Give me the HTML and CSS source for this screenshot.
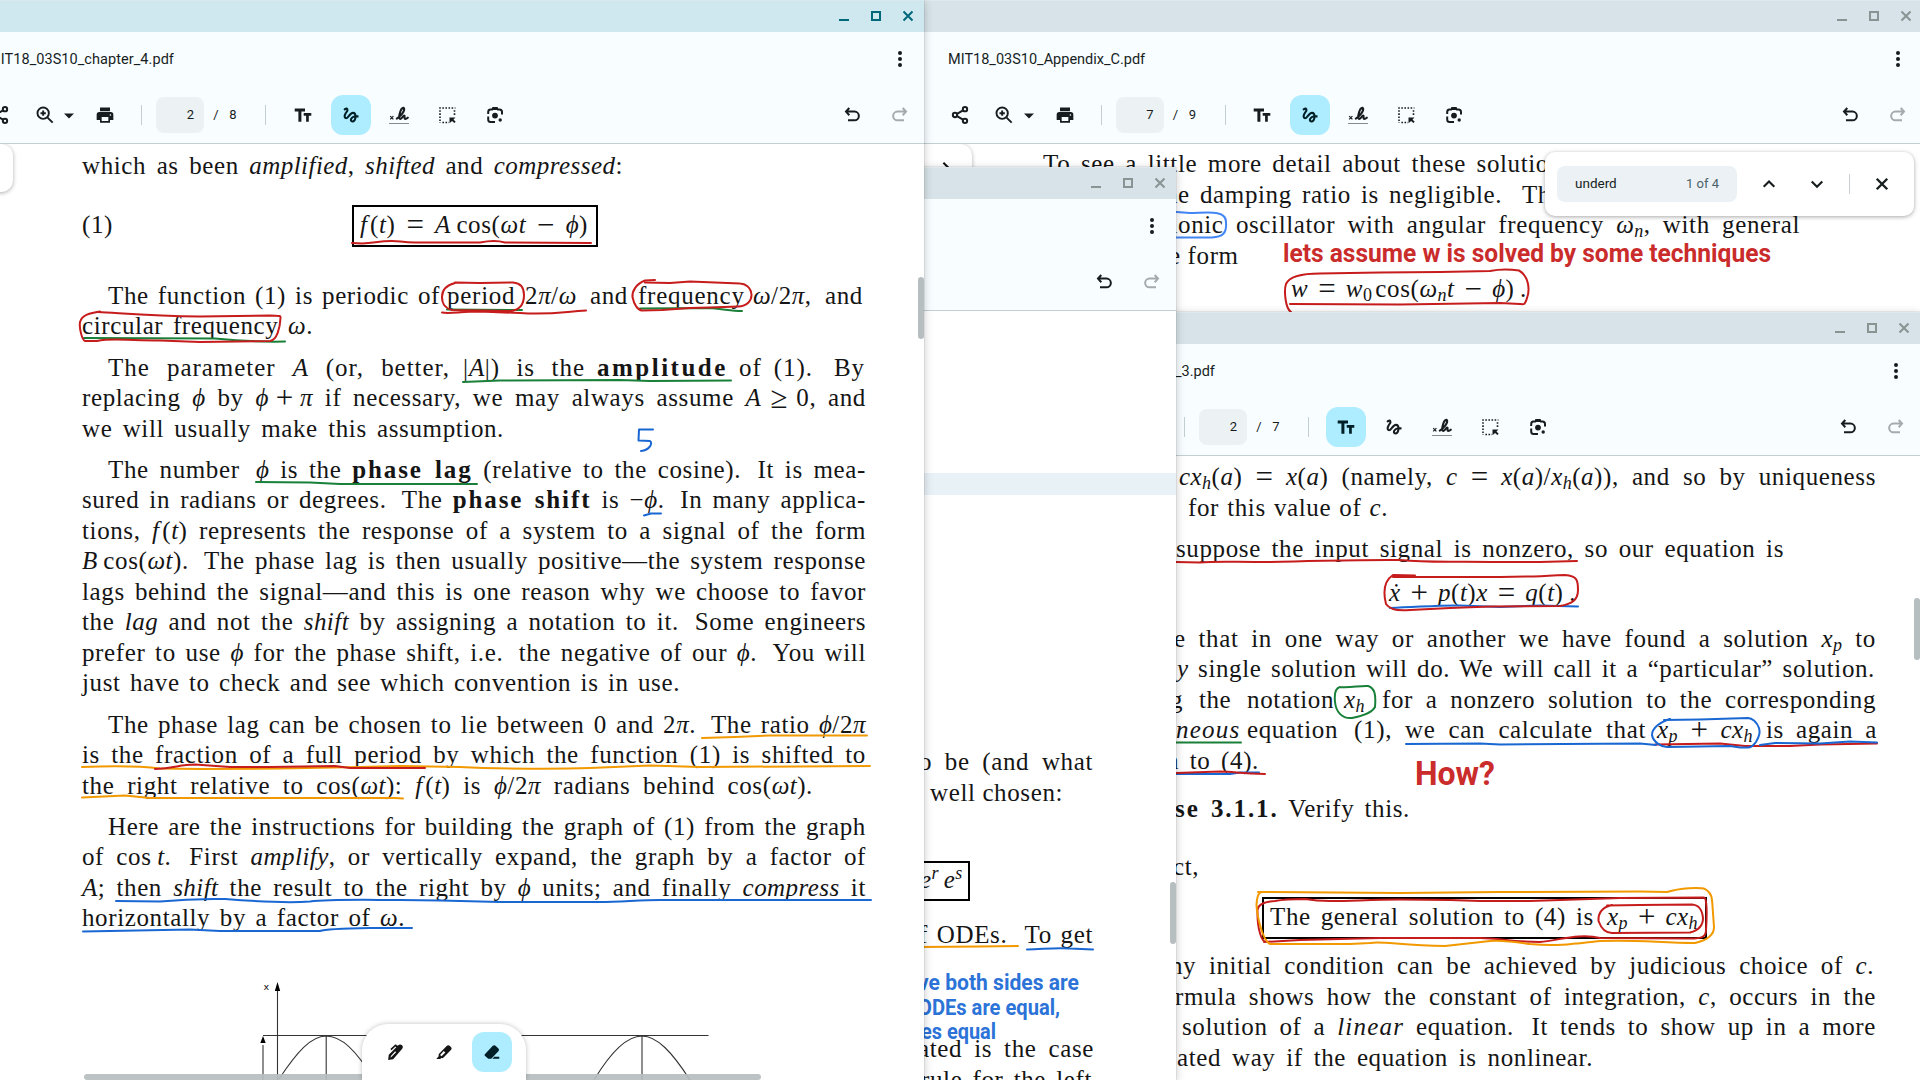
FILE: index.html
```html
<!DOCTYPE html>
<html lang="en">
<head>
<meta charset="utf-8">
<title>MIT18_03S10_chapter_4.pdf</title>
<link rel="stylesheet" href="styles.css">
</head>
<body>
<svg class="defs" aria-hidden="true">
  <symbol id="i-share" viewBox="0 0 24 24"><g fill="none" stroke="currentColor" stroke-width="2.4"><circle cx="18" cy="5" r="2.6"/><circle cx="6" cy="12" r="2.6"/><circle cx="18" cy="19" r="2.6"/><path d="M8.4 10.6l7.2-4.2M8.4 13.4l7.2 4.2"/></g></symbol>
  <symbol id="i-zoom" viewBox="0 0 24 24"><g fill="none" stroke="currentColor" stroke-width="2.3"><circle cx="9.8" cy="9.8" r="6.8"/><path d="M14.8 14.8l6.4 6.4M9.8 6.6v6.4M6.6 9.8H13"/></g></symbol>
  <symbol id="i-caret" viewBox="0 0 10 6"><path d="M0 .5h10L5 5.5z" fill="currentColor"/></symbol>
  <symbol id="i-print" viewBox="0 0 24 24"><path fill="currentColor" d="M18 7.5H6V3h12zM19 8.5H5a3 3 0 0 0-3 3V18h4v3.4h12V18h4v-6.500a3 3 0 0 0-3-3zM16 19.200H8v-4.700h8zM18.500 13a1 1 0 1 1 0-2 1 1 0 0 1 0 2z"/></symbol>
  <symbol id="i-text" viewBox="0 0 24 24"><path fill="currentColor" d="M3.700 5.500H14v3h-3.600v10.200h-3V8.500H3.700zM12.700 10h7.600v2.700h-2.500v6h-2.700v-6h-2.400z"/></symbol>
  <symbol id="i-draw" viewBox="0 0 24 24"><path fill="currentColor" d="M4.590 6.890c.7-.71 1.4-1.350 1.710-1.220.5.2 0 1.030-.3 1.520-.25.42-2.860 3.890-2.860 6.310 0 1.280.48 2.340 1.340 2.980.75.56 1.740.73 2.640.46 1.070-.31 1.950-1.400 3.060-2.770 1.210-1.490 2.830-3.440 4.080-3.440 1.630 0 1.650 1.010 1.760 1.790-3.780.64-5.380 3.670-5.380 5.370 0 1.700 1.440 3.090 3.210 3.090 1.630 0 4.290-1.330 4.690-6.100H21v-2.500h-2.470c-.15-1.650-1.090-4.200-4.030-4.200-2.250 0-4.180 1.910-4.940 2.840-.58.73-2.060 2.480-2.290 2.720-.25.3-.68.84-1.110.84-.45 0-.72-.83-.36-1.920.35-1.090 1.400-2.860 1.850-3.520.78-1.140 1.300-1.920 1.300-3.280C8.950 3.690 7.310 3 6.440 3 5.120 3 3.970 4 3.720 4.250c-.36.36-.66.66-.88.93zM13.880 18.550c-.31 0-.74-.26-.74-.72 0-.6.73-2.200 2.870-2.760-.3 2.690-1.430 3.480-2.130 3.480z"/></symbol>
  <symbol id="i-sign" viewBox="0 0 24 24"><g fill="none" stroke="currentColor"><path stroke-width="1.200" d="M3.200 13.200l3.200 3.200M6.400 13.200l-3.200 3.200"/><path stroke-width="2.100" stroke-linecap="round" d="M9.800 15.600c4-2.300 8-7.400 7.300-10-.6-1.700-2.600-.6-3.600 2.400-1 3-2.200 7.600-.2 8 1.800.1 2.600-3.600 3.900-3.500 1.200.2-.5 3.200.8 3.400.8.100 1.800-.3 2.800-1.200"/><path stroke-width="1" stroke-dasharray="1 1" d="M2.500 20.500H22"/></g></symbol>
  <symbol id="i-select" viewBox="0 0 24 24"><g fill="none" stroke="currentColor" stroke-width="1.600" stroke-dasharray="1.600 1.500"><path d="M4.200 5h16.200M5 7.200V20M19.500 7.200V13M7.400 19.500H14"/></g><path fill="currentColor" d="M14.500 14.500h6l-2 2 2.200 2.200-1.400 1.400-2.200-2.200-2.600 2.400z"/></symbol>
  <symbol id="i-lens" viewBox="0 0 24 24"><g fill="none" stroke="currentColor" stroke-width="2"><path d="M5.200 11V9.200A2.500 2.500 0 0 1 7.500 6.600h1.700L10.300 5h3.400l1.100 1.600h1.700a2.500 2.500 0 0 1 2.500 2.500V11.500M5.200 13.500v3A2.500 2.500 0 0 0 7.700 19H12"/></g><path fill="currentColor" d="M9.500 4h5v3h-5z"/><circle cx="12" cy="12.600" r="2.900" fill="currentColor"/><circle cx="17.200" cy="17" r="1.700" fill="currentColor"/></symbol>
  <symbol id="i-undo" viewBox="0 0 24 24"><path fill="none" stroke="currentColor" stroke-width="2" d="M9.300 5L6 8.600l3.300 3.600M6.300 8.600h8.200a4.200 4.200 0 0 1 0 8.700H8"/></symbol>
  <symbol id="i-redo" viewBox="0 0 24 24"><path fill="none" stroke="currentColor" stroke-width="2" d="M14.700 5L18 8.600l-3.300 3.600M17.700 8.600H9.500a4.200 4.200 0 0 0 0 8.700H16"/></symbol>
  <symbol id="i-x" viewBox="0 0 12 12"><path fill="none" stroke="currentColor" stroke-width="2" d="M1.500 1.500l9 9M10.500 1.500l-9 9"/></symbol>
  <symbol id="i-up" viewBox="0 0 14 14"><path fill="none" stroke="currentColor" stroke-width="2.100" d="M1.700 9.700L7 4.400l5.300 5.300"/></symbol>
  <symbol id="i-down" viewBox="0 0 14 14"><path fill="none" stroke="currentColor" stroke-width="2.100" d="M1.700 4.400L7 9.700l5.300-5.300"/></symbol>
  <symbol id="i-pen" viewBox="0 0 24 24"><path fill="currentColor" d="M2.600 21.500l.7-6.200L12.300 6.300l-1-.9-4.700 4.500-1.400-1.400 5.200-5c.6-.6 1.600-.6 2.200 0l1.200 1.100.9-.8c1.500-1.400 3.300-1.100 4.500.1s1.500 2.900 0 4.400L8.600 20.800zM5.500 18.900l6.600-6.600-1.100-1.100-5.100 5.600z"/></symbol>
  <symbol id="i-marker" viewBox="0 0 24 24"><path fill="currentColor" d="M2.800 20.300l3-3.400c-.5-1-.3-2 .3-2.800L15.200 4.700c1.200-1.100 2.700-1.100 3.800 0l1.300 1.200c1.100 1.100 1.100 2.600 0 3.700l-8.800 9c-.8.800-1.900 1-2.900.6l-1 1.100zM9 17.200l4.600-4.600-1.900-1.700L7.300 15.500z"/></symbol>
  <symbol id="i-eraser" viewBox="0 0 24 24"><path fill="currentColor" d="M3.400 14.700l9.600-10.200c.9-.9 2.300-.9 3.200 0l3.500 3.400c.9.900.9 2.300 0 3.200l-8.600 9H7.500l-4.100-3.700c-.5-.5-.5-1.200 0-1.700zM14.700 17.700h6v2.400h-8.200z"/></symbol>
</svg>

<main class="desktop">

<!-- Appendix C -->
<section class="win win-appendix">
  <header class="titlebar"><i class="min"></i><i class="max"></i><svg class="cls"><use href="#i-x"/></svg></header>
  <div class="chrome">
    <div class="namebar"><span class="name">MIT18_03S10_Appendix_C.pdf</span><span class="dots"><i></i><i></i><i></i></span></div>
    <div class="tools">
      <span class="tool share"><svg><use href="#i-share"/></svg></span>
      <span class="tool zoom"><svg><use href="#i-zoom"/></svg></span>
      <svg class="caret"><use href="#i-caret"/></svg>
      <span class="tool print"><svg><use href="#i-print"/></svg></span>
      <i class="rule"></i>
      <span class="pageno">7</span><span class="slash">/</span><span class="total">9</span>
      <i class="rule second"></i>
      <div class="modes">
        <span class="tool"><svg class="big"><use href="#i-text"/></svg></span>
        <span class="tool on"><svg><use href="#i-draw"/></svg></span>
        <span class="tool"><svg class="big"><use href="#i-sign"/></svg></span>
        <span class="tool"><svg class="big"><use href="#i-select"/></svg></span>
        <span class="tool"><svg class="big"><use href="#i-lens"/></svg></span>
      </div>
      <div class="history"><span class="tool"><svg class="big"><use href="#i-undo"/></svg></span><span class="tool off"><svg class="big"><use href="#i-redo"/></svg></span></div>
    </div>
  </div>
  <div class="doc">
    <div class="ln" style="--x:127px;--w:506px">To see a little more detail about these solutio</div>
    <div class="ln" style="--x:249px;--w:386px">he damping ratio is negligible.&nbsp; Th</div>
    <div class="ln" style="--x:242px;--w:642px">monic oscillator with angular frequency <em>ω<sub>n</sub></em>, with general</div>
    <div class="ln" style="--x:253px;--w:68px">e form</div>
    <div class="ln" style="--x:375px;--w:236px;--t:3.3px"><em>w</em> <i class="op">=</i> <em>w</em><sub>0</sub>&#8202;cos(<em>ω<sub>n</sub>t</em> <i class="op">−</i> <em>ϕ</em>)&#8201;.</div>
    <svg class="ink" viewBox="916 144 1006 936" width="1006" height="936">
      <path class="b2" d="M1170 211.500L1190 213C1205 213 1226 209 1226 222C1227 234 1222 237 1212 237.500L1170 237.500"/>
      <path class="r" d="M1291 312C1285 308 1284 290 1286 284C1290 275 1305 273.500 1320 273.500L1380 272.500L1440 272L1490 271C1500 269 1512 269.500 1519 270.500C1529 276 1530 290 1527 298C1525 305 1524 304.500 1520 304L1500 303L1400 304.500L1290 304"/>
      <text class="note red" font-size="25" x="1283" y="261.500" textLength="488" lengthAdjust="spacingAndGlyphs">lets assume w is solved by some techniques</text>
    </svg>
    <div class="sidepill"><svg><use href="#i-down"/></svg></div>
    <div class="find">
      <div class="field"><span>underd</span><span class="count">1 of 4</span></div>
      <span class="tool"><svg><use href="#i-up"/></svg></span>
      <span class="tool"><svg><use href="#i-down"/></svg></span>
      <i class="rule"></i>
      <span class="tool"><svg><use href="#i-x"/></svg></span>
    </div>
  </div>
</section>

<!-- Chapter 3 -->
<section class="win win-ch3">
  <header class="titlebar"><i class="min"></i><i class="max"></i><svg class="cls"><use href="#i-x"/></svg></header>
  <div class="chrome">
    <div class="namebar"><span class="name">_3.pdf</span><span class="dots"><i></i><i></i><i></i></span></div>
    <div class="tools">
      <i class="rule"></i>
      <span class="pageno">2</span><span class="slash">/</span><span class="total">7</span>
      <i class="rule second"></i>
      <div class="modes">
        <span class="tool on"><svg class="big"><use href="#i-text"/></svg></span>
        <span class="tool"><svg><use href="#i-draw"/></svg></span>
        <span class="tool"><svg class="big"><use href="#i-sign"/></svg></span>
        <span class="tool"><svg class="big"><use href="#i-select"/></svg></span>
        <span class="tool"><svg class="big"><use href="#i-lens"/></svg></span>
      </div>
      <div class="history"><span class="tool"><svg class="big"><use href="#i-undo"/></svg></span><span class="tool off"><svg class="big"><use href="#i-redo"/></svg></span></div>
    </div>
  </div>
  <div class="doc">
    <div class="ln" style="--x:179px;--w:697px"><em>cx<sub>h</sub></em>(<em>a</em>) <i class="op">=</i> <em>x</em>(<em>a</em>) (namely, <em>c</em> <i class="op">=</i> <em>x</em>(<em>a</em>)/<em>x<sub>h</sub></em>(<em>a</em>)), and so by uniqueness</div>
    <div class="ln" style="--x:188px;--w:200px">for this value of <em>c</em>.</div>
    <div class="ln" style="--x:176px;--w:608px;--t:10.700px">suppose the input signal is nonzero, so our equation is</div>
    <div class="ln" style="--x:389px;--w:187px;--t:13.800px"><em>ẋ</em> <i class="op">+</i> <em>p</em>(<em>t</em>)<em>x</em> <i class="op">=</i> <em>q</em>(<em>t</em>)&#8201;.</div>
    <div class="ln" style="--x:174px;--w:702px;--t:15.200px">e that in one way or another we have found a solution <em>x<sub>p</sub></em> to</div>
    <div class="ln" style="--x:177px;--w:698px"><em>y</em> single solution will do. We will call it a “particular” solution.</div>
    <div class="ln split" style="--x:170px;--w:706px">
      <span style="--w:164px">g the notation</span><span style="--w:24px;--g:10px"><em>x<sub>h</sub></em></span><span style="--w:494px;--g:14px">for a nonzero solution to the corresponding</span>
    </div>
    <div class="ln split" style="--x:176px;--w:701px">
      <span style="--w:61px"><em class="wide">neous</em></span><span style="--w:145px;--g:10px">equation (1),</span><span style="--w:241px;--g:13px">we can calculate that</span><span style="--w:96px;--g:11px"><em>x<sub>p</sub></em> <i class="op">+</i> <em>cx<sub>h</sub></em></span><span style="--w:111px;--g:13px">is again a</span>
    </div>
    <div class="ln" style="--x:166px;--w:93px">n to (4).</div>
    <div class="ln" style="--x:175px;--w:235px;--t:17.500px"><b>se 3.1.1.</b> Verify this.</div>
    <div class="ln" style="--x:173px;--w:24px;--t:27.800px">ct,</div>
    <div class="boxed" style="--x:262px;--w:445px;--t:15.200px"><div class="ln" style="--x:6px;--w:428px">The general solution to (4) is&#8194;<em>x<sub>p</sub></em> <i class="op">+</i> <em>cx<sub>h</sub></em></div></div>
    <div class="ln" style="--x:170px;--w:704px;--t:11px">ny initial condition can be achieved by judicious choice of <em>c</em>.</div>
    <div class="ln" style="--x:175px;--w:701px">rmula shows how the constant of integration, <em>c</em>, occurs in the</div>
    <div class="ln" style="--x:182px;--w:694px">solution of a <em class="wide">linear</em> equation.&#8201; It tends to show up in a more</div>
    <div class="ln" style="--x:177px;--w:416px">ated way if the equation is nonlinear.</div>
    <svg class="ink" viewBox="1000 456 920 624" width="920" height="624">
      <path class="r" d="M1176 562L1200 562.500C1215 561 1230 562 1270 562C1330 561 1360 559.500 1400 560C1430 563 1450 561 1500 562L1540 562L1577 561"/>
      <path class="b" d="M1390 608C1420 607 1440 605 1460 605.500L1500 607L1540 605.500L1578 606.500"/>
      <path class="r" d="M1415 575.500L1393 575C1384 581 1383 592 1386 604C1390 610 1400 611 1410 610L1450 608L1490 606.500L1560 606C1572 604 1578 600 1578 590C1578 580 1577 576 1565 575C1550 575 1545 577 1530 576.500L1500 577L1393 577"/>
      <path class="g" d="M1340 687C1350 688 1360 685.500 1368 686C1375 688 1376 695 1375 707C1372 713 1362 716 1352 718C1342 719 1336 712 1335 702C1334 692 1336 688 1340 687M1176 742.500H1241"/>
      <path class="r" d="M1655 744.500L1720 743.500L1745 746L1790 746L1820 744.500L1877 743.500"/>
      <path class="b" d="M1406 744L1480 743.500L1500 744.500L1640 743.500L1656 745M1760 745L1775 743L1820 743.500L1850 741.500L1877 742.500M1670 719C1660 722 1652 728 1652 735C1653 742 1662 747.500 1668 747L1730 746L1740 747.500C1752 748 1752 747 1756 742C1760 735 1760 732 1759 728C1757 722 1752 718 1748 718L1700 719.500L1664 720"/>
      <path class="b" d="M1176 774L1230 774L1240 772.500L1259 772.500"/>
      <path class="r" d="M1176 773L1220 771.500C1235 771.500 1240 774 1265 774"/>
      <path class="r" d="M1266 942C1262 942 1257 930 1257.500 910C1258 904 1266 901.500 1275 901C1285 899 1295 899 1305 899C1330 903 1350 900 1400 899.500L1450 900L1480 901L1530 901L1620 898L1704 897.500C1707 898 1707 915 1706 930C1706 937 1702 938.500 1690 938.500L1600 938C1580 933 1560 940 1540 942C1510 942 1500 938 1480 938L1380 938L1300 940L1264 942"/>
      <path class="r" d="M1612 905C1603 907 1598 912 1598.500 921C1601 928 1606 933 1612 933L1690 932.500C1700 930 1703 925 1703 918C1702 909 1699 905 1692 904.500L1640 905L1607 905.500"/>
      <path class="o" d="M1258 892L1400 893L1500 892L1640 891.500L1667 892C1680 888 1700 887 1705 889C1712 893 1712 898 1712.500 906L1714 927C1714 935 1708 940 1695 943C1660 943 1640 939.500 1600 941C1580 943 1560 947 1530 944C1510 941 1500 940 1490 941L1445 946C1400 945 1380 941 1370 943L1350 944L1270 944C1262 940 1257 915 1256.500 905C1257 895 1259 892 1262 892"/>
      <text class="note red" font-size="33.500" x="1415" y="784.500" textLength="80" lengthAdjust="spacingAndGlyphs">How?</text>
    </svg>
    <i class="vbar"></i>
  </div>
</section>

<!-- middle window -->
<section class="win win-mid">
  <header class="titlebar"><i class="min"></i><i class="max"></i><svg class="cls"><use href="#i-x"/></svg></header>
  <div class="chrome">
    <div class="namebar"><span class="name"></span><span class="dots"><i></i><i></i><i></i></span></div>
    <div class="tools">
      <div class="history"><span class="tool"><svg class="big"><use href="#i-undo"/></svg></span><span class="tool off"><svg class="big"><use href="#i-redo"/></svg></span></div>
    </div>
  </div>
  <div class="doc">
    <div class="sheet-end"></div>
    <div class="sheet-gap"></div>
    <div class="ln" style="--x:219px;--w:174px;--t:252px">o be (and what</div>
    <div class="ln" style="--x:230px;--w:131px">well chosen:</div>
    <div class="boxed short" style="--x:190px;--w:80px;--t:52.500px"><div class="ln" style="--x:28px;--w:38px"><em>e<sup>r</sup></em>&#8198;<em>e<sup>s</sup></em></div></div>
    <div class="ln" style="--x:219px;--w:174px;--t:19.500px">f ODEs.&nbsp; To get</div>
    <div class="ln" style="--x:218px;--w:176px;--t:83.500px">ated is the case</div>
    <div class="ln" style="--x:221px;--w:171px">rule for the left</div>
    <svg class="ink" viewBox="700 311 476 769" width="476" height="769">
      <path class="o" d="M920 947L980 946.500L1018 946"/>
      <path class="b" d="M1027 949.500C1045 949 1055 947.500 1070 948.500L1093 949.500"/>
      <text class="note blue" font-size="22.500" x="918" y="989.700" textLength="161" lengthAdjust="spacingAndGlyphs">ve both sides are</text>
      <text class="note blue" font-size="22.500" x="918" y="1014.700" textLength="142" lengthAdjust="spacingAndGlyphs">ODEs are equal,</text>
      <text class="note blue" font-size="22.500" x="921" y="1039.300" textLength="75" lengthAdjust="spacingAndGlyphs">es equal</text>
    </svg>
    <i class="vbar"></i>
  </div>
</section>

<!-- Chapter 4 -->
<section class="win win-ch4 active">
  <header class="titlebar"><i class="min"></i><i class="max"></i><svg class="cls"><use href="#i-x"/></svg></header>
  <div class="chrome">
    <div class="namebar"><span class="name">MIT18_03S10_chapter_4.pdf</span><span class="dots"><i></i><i></i><i></i></span></div>
    <div class="tools">
      <span class="tool share"><svg><use href="#i-share"/></svg></span>
      <span class="tool zoom"><svg><use href="#i-zoom"/></svg></span>
      <svg class="caret"><use href="#i-caret"/></svg>
      <span class="tool print"><svg><use href="#i-print"/></svg></span>
      <i class="rule"></i>
      <span class="pageno">2</span><span class="slash">/</span><span class="total">8</span>
      <i class="rule second"></i>
      <div class="modes">
        <span class="tool"><svg class="big"><use href="#i-text"/></svg></span>
        <span class="tool on"><svg><use href="#i-draw"/></svg></span>
        <span class="tool"><svg class="big"><use href="#i-sign"/></svg></span>
        <span class="tool"><svg class="big"><use href="#i-select"/></svg></span>
        <span class="tool"><svg class="big"><use href="#i-lens"/></svg></span>
      </div>
      <div class="history"><span class="tool"><svg class="big"><use href="#i-undo"/></svg></span><span class="tool off"><svg class="big"><use href="#i-redo"/></svg></span></div>
    </div>
  </div>
  <div class="doc">
    <div class="ln" style="--w:541px">which as been <em>amplified</em>, <em>shifted</em> and <em>compressed</em>:</div>
    <div class="eqrow">
      <span class="eqno">(1)</span>
      <div class="boxed" style="--x:239px;--w:246px"><div class="ln" style="--x:6px;--w:228px"><em>f</em>&#8202;(<em>t</em>) <i class="op">=</i> <em>A</em>&#8201;cos(<em>ωt</em> <i class="op">−</i> <em>ϕ</em>)</div></div>
    </div>
    <div class="para">
      <div class="ln split">
        <span style="--w:332px;--g:26px">The function (1) is periodic of</span><span class="ringed" style="--w:73px;--g:7px">period</span><span style="--w:57px;--g:5px">2<em>π</em>/<em>ω</em></span><span style="--w:40px;--g:8px">and</span><span class="ringed" style="--w:107px;--g:8px">frequency</span><span style="--w:64px;--g:8px"><em>ω</em>/2<em>π</em>,</span><span style="--w:41px;--g:8px">and</span>
      </div>
      <div class="ln" style="--w:231px">circular frequency <em>ω</em>.</div>
    </div>
    <div class="para">
      <div class="ln split loose">
        <span style="--w:342px;--g:26px">The parameter <em>A</em> (or, better,</span><span style="--w:122px;--g:13px">|<em>A</em>|) is the</span><span style="--w:130px;--g:12px"><b>amplitude</b></span><span style="--w:74px;--g:12px">of (1).</span><span style="--w:32px;--g:21px">By</span>
      </div>
      <div class="ln">replacing <em>ϕ</em> by <em>ϕ</em>&#8197;<i class="op">+</i>&#8197;<em>π</em> if necessary, we may always assume <em>A</em>&#8196;<i class="op">≥</i>&#8196;0, and</div>
      <div class="ln" style="--w:422px">we will usually make this assumption.</div>
    </div>
    <div class="para">
      <div class="ln first">The number&#8201; <em>ϕ</em> is the <b>phase lag</b> (relative to the cosine).&#8201; It is mea-</div>
      <div class="ln">sured in radians or degrees.&#8201; The <b>phase shift</b> is −<em>ϕ</em>.&#8201; In many applica-</div>
      <div class="ln">tions, <em>f</em>&#8202;(<em>t</em>) represents the response of a system to a signal of the form</div>
      <div class="ln"><em>B</em>&#8201;cos(<em>ωt</em>).&#8201; The phase lag is then usually positive—the system response</div>
      <div class="ln">lags behind the signal—and this is one reason why we choose to favor</div>
      <div class="ln">the <em>lag</em> and not the <em>shift</em> by assigning a notation to it.&#8201; Some engineers</div>
      <div class="ln">prefer to use <em>ϕ</em> for the phase shift, i.e.&#8201; the negative of our <em>ϕ</em>.&#8201; You will</div>
      <div class="ln" style="--w:598px">just have to check and see which convention is in use.</div>
    </div>
    <div class="para">
      <div class="ln first">The phase lag can be chosen to lie between 0 and 2<em>π</em>.&#8201; The ratio <em>ϕ</em>/2<em>π</em></div>
      <div class="ln">is the fraction of a full period by which the function (1) is shifted to</div>
      <div class="ln" style="--w:731px">the right relative to cos(<em>ωt</em>): <em>f</em>&#8202;(<em>t</em>) is <em>ϕ</em>/2<em>π</em> radians behind cos(<em>ωt</em>).</div>
    </div>
    <div class="para">
      <div class="ln first">Here are the instructions for building the graph of (1) from the graph</div>
      <div class="ln">of cos&#8201;<em>t</em>.&#8201; First <em>amplify</em>, or vertically expand, the graph by a factor of</div>
      <div class="ln"><em>A</em>; then <em>shift</em> the result to the right by <em>ϕ</em> units; and finally <em>compress</em> it</div>
      <div class="ln" style="--w:323px">horizontally by a factor of <em>ω</em>.</div>
    </div>
    <svg class="ink" viewBox="-44 144 968 936" width="968" height="936">
      <path class="r" d="M352 243L362 243.500C375 243 378 241 392 241C400 241 402 242.500 415 242.500L480 242.500C490 240.500 500 241 505 242.500L591 243"/>
      <path class="g" d="M447 309.500L522 310M640 308.500L710 308C725 309 730 311 742 311"/>
      <path class="r" d="M455 283C447 285 442 290 442 297C442 305 447 309 452 310L510 311C522 310 524 302 524 295C524 287 520 283 513 282.500L480 283L455 282.500M442 312.500C450 314 460 311.500 480 311.500L520 313C550 315 562 312 586 310.500"/>
      <path class="r" d="M655 280L645 280.500C636 284 632 291 632.500 297C634 305 638 310 642 310.500L662 310L690 308L710 307.500L738 306.500C748 306 751.500 300 751.500 295C751 287 745 283.500 740 283.500L690 281.500L670 283L645 282.500"/>
      <path class="g" d="M84 338L215 338.500C240 341 265 342 285 341.500"/>
      <path class="r" d="M100 311.500C90 313 82 315 80 322C79 328 82 340 85 341L97 341C115 337.500 125 341 160 340.500L200 342L270 341C277 340 280 328 280.500 318C281 315 278 316 270 315.500L200 316.500C150 316 120 313 98 312"/>
      <path class="g" d="M463 382L500 380.500L620 380L650 381L731 380.500M256 482L310 482.500L340 484L477 484"/>
      <path class="b" d="M653 429.500L639 429.500L638.500 440.500L650 441C653 443 650 450 641 451M644 515.500L651 513.500L661 513.500"/>
      <path class="o" d="M702 738L735 737L770 735.500L867 735.500M82 767C110 766 140 766 160 768.500L200 769L280 768.500L360 767L400 766L460 767C500 769 560 769 590 768L650 765.500L700 767L870 766M82 797.500L125 795.500L150 798L395 798L403 798.500"/>
      <path class="r" d="M155 769C175 768 180 764.500 195 764.500L230 767L270 767L335 766L350 768L425 768"/>
      <path class="b" d="M116 901L160 901.500C185 899 200 898.500 225 899C250 901 290 903 310 901.500C330 899 370 900 400 900L440 900.500L500 902L560 902L600 902C620 902 640 900 660 900L871 900M83 931.500L190 929.500L220 931L320 931C325 929 340 928.500 370 928L412 928"/>
      <g class="plot">
        <path d="M277.500 990V1080M263 1045V1080M263 1035.500H708.500M326.200 1036V1080M642 1036V1080M279 1079C297 1052 311 1036 326 1036S356 1049 373 1079M594 1080C612 1050 627 1036 642 1036S672 1052 690 1080"/>
        <path class="tip" d="M277.500 982l2.700 9h-5.400zM263 1036l2.700 7h-5.400z"/>
        <text x="263.500" y="990" font-size="9.500">x</text>
      </g>
    </svg>
    <div class="sidepill"></div>
    <i class="hbar"></i>
    <i class="vbar"></i>
    <div class="inkbar">
      <span class="tool"><svg><use href="#i-pen"/></svg></span>
      <span class="tool"><svg><use href="#i-marker"/></svg></span>
      <span class="tool on"><svg><use href="#i-eraser"/></svg></span>
    </div>
  </div>
</section>
</main>
</body>
</html>
```
FILE: styles.css
```css
* { box-sizing: border-box; }
html, body { margin: 0; height: 100%; overflow: hidden; }
body { font-family: Roboto, "Liberation Sans", sans-serif; color: #171d1e; background: #d7e3e8; }
.defs { position: absolute; width: 0; height: 0; }
.desktop { position: relative; width: 1920px; height: 1080px; overflow: hidden; }

/* windows on the desktop */
.win { position: absolute; display: flex; flex-direction: column; background: #fff; box-shadow: 0 0 1px rgba(0,0,0,.35), 0 2px 9px rgba(0,0,0,.22); }
.win-appendix { left: 916px; top: 0; width: 1006px; height: 1080px; }
.win-ch3 { left: 1000px; top: 312px; width: 920px; height: 768px; }
.win-mid { left: 700px; top: 167px; width: 476px; height: 913px; }
.win-ch4 { left: -44px; top: 0; width: 968px; height: 1080px; }

.titlebar { height: 32px; flex: none; display: flex; justify-content: flex-end; align-items: center; gap: 22px; padding: 0 11px 1px 0; background: #d7e3e8; color: #899394; border-top: 1px solid #dfe9ed; }
.active .titlebar { background: #cfe7ee; color: #00687a; border-top-color: #d6e9ef; }
.titlebar .min { width: 10px; height: 2px; background: currentColor; margin-top: 8px; }
.titlebar .max { width: 10px; height: 10px; border: 2px solid currentColor; }
.titlebar .cls { width: 12px; height: 12px; margin: 0 -1px; }

.chrome { height: 112px; flex: none; background: #f8fdff; border-bottom: 1px solid #c4cfd3; }
.namebar { height: 54px; display: flex; justify-content: space-between; align-items: center; padding: 0 22px 0 32px; }
.name { font-size: 14.5px; }
.active .name { letter-spacing: .06px; }
.dots { display: flex; flex-direction: column; gap: 2px; }
.dots i { width: 4px; height: 4px; border-radius: 50%; background: #171d1e; }
.tools { height: 57px; display: flex; align-items: center; padding: 0 4px 0 24px; }
.win-appendix .tools { padding-left: 23.5px; }
.tool { width: 40px; height: 40px; border-radius: 12px; display: flex; align-items: center; justify-content: center; flex: none; }
.tool svg { width: 20px; height: 20px; }
.tool svg.big { width: 24px; height: 24px; }
.tool.on { background: #aeecff; color: #001f26; }
.tool.off { color: #a5abad; }
.zoom { margin-left: 4.5px; }
.caret { width: 10px; height: 6px; margin: 2px 11px 0 -.5px; }
.rule { width: 1px; height: 20px; background: #c4cfd3; flex: none; margin: 0 14px 0 16px; }
.rule.second { margin: 0 16.5px 0 27px; }
.pageno { width: 48px; height: 36px; border-radius: 8px; background: #ecf1f4; font-size: 13px; line-height: 36px; text-align: right; padding-right: 10px; }
.slash { width: 24px; text-align: center; font-size: 13px; }
.total { width: 10px; text-align: center; font-size: 13px; }
.modes, .history { display: flex; gap: 8px; }
.history { margin-left: auto; }
.win-ch3 .namebar { padding-left: 175px; }
.win-ch3 .tools { padding-left: 168px; }

/* PDF page content */
.doc { position: relative; flex: 1; overflow: hidden; background: #fff; font-family: "Liberation Serif", serif; font-size: 25px; letter-spacing: .62px; color: #151515; }
.win-ch4 .doc { padding: 7.3px 0 0 126px; }
.win-appendix .doc { padding-top: 5px; }
.win-ch3 .doc { padding-top: 6.3px; }
.ln { width: var(--w, 784px); margin: var(--t, 0) 0 0 var(--x, 0); height: 30.5px; line-height: 30.5px; white-space: nowrap; text-align: justify; text-align-last: justify; }
.ln.first { text-indent: 26px; }
.ln.split { display: flex; }
.ln.split > span { flex: none; width: var(--w); margin-left: var(--g, 0); }
.ln.loose { letter-spacing: .95px; }
.ln b { letter-spacing: 1.9px; }
.ln.loose b { letter-spacing: 2.5px; }
.ln em { letter-spacing: .45px; }
.ln .wide { letter-spacing: 1.2px; }
.ln sub, .ln sup { font-size: 18px; line-height: 0; }
.ln sub { vertical-align: -4px; }
.ln sup { vertical-align: 9px; }
.op { font-style: normal; font-size: 31px; line-height: 0; letter-spacing: 0; vertical-align: -1.5px; }
.ringed { letter-spacing: .75px; }
.para + .para { margin-top: 10.8px; }
.eqrow { display: flex; align-items: center; margin: 22.8px 0 33.8px; }
.eqno { width: 31px; margin-top: -2px; }
.boxed { width: var(--w); height: 42.4px; margin: var(--t, 0) 0 0 var(--x, 0); padding-top: 3.5px; border: 2px solid #000; }
.boxed .ln { margin-top: 0; }
.boxed.short { height: 40px; padding-top: 2px; }
.win-ch3 .boxed { position: relative; top: -1px; }

.sheet-end { height: 162px; background: #fff; }
.sheet-gap { height: 22px; background: #e8f1f6; }

/* annotations drawn over the page */
.ink { position: absolute; left: 0; top: 0; fill: none; stroke-width: 2; stroke-linecap: round; stroke-linejoin: round; }
.ink .r { stroke: #c61c1c; }
.ink .g { stroke: #188038; }
.ink .b { stroke: #1967d2; }
.ink .b2 { stroke: #4285f4; }
.ink .o { stroke: #f29900; }
.note { font-family: Roboto, sans-serif; font-weight: 700; letter-spacing: 0; }
.note.red { fill: #ca2b2b; }
.note.blue { fill: #2c73d8; }
.plot { stroke: #333; stroke-width: 1.1; stroke-linecap: butt; }
.plot .tip { fill: #000; stroke: none; }
.plot text { fill: #111; stroke: none; font-family: "DejaVu Sans", sans-serif; letter-spacing: 0; }

.vbar, .hbar { position: absolute; background: #b7bec0; border-radius: 3px; }
.vbar { right: 0; width: 6px; height: 62px; }
.win-ch4 .vbar { top: 133px; }
.win-ch3 .vbar { top: 142px; }
.win-mid .vbar { top: 571px; }
.hbar { left: 128px; bottom: 0; width: 677px; height: 6px; opacity: .92; }

.sidepill { position: absolute; top: 0; left: -10px; width: 67px; height: 48px; border-radius: 0 12px 12px 0; background: #fff; box-shadow: 0 1px 4px rgba(0,0,0,.32); clip-path: inset(0 -6px -6px 0); }
.sidepill svg { position: absolute; width: 14px; height: 14px; left: 33px; top: 17px; transform: rotate(-90deg); }
.win-appendix .sidepill { width: 66px; }

.find { position: absolute; right: 8px; top: 8px; width: 369px; height: 64px; padding: 0 12px; display: flex; align-items: center; background: #fff; border-radius: 10px; box-shadow: 0 1px 4px rgba(0,0,0,.35); font-family: Roboto, sans-serif; font-size: 14px; color: #171d1e; }
.find .field { flex: none; width: 180px; height: 36px; margin-right: 12px; padding: 0 18px; line-height: 35px; display: flex; justify-content: space-between; border-radius: 8px; background: #ebf1f4; letter-spacing: 0; }
.find .field span:first-child { font-size: 13.5px; }
.find .count { color: #4b6269; font-size: 13px; }
.find .tool { margin-right: 8px; }
.find .tool svg { width: 14px; height: 14px; }
.find .rule { margin: 0 12px 0 4px; }

.inkbar { position: absolute; left: 406px; bottom: 0; width: 164px; height: 56px; padding: 8px 14px 0; display: flex; gap: 8px; background: #fff; border-radius: 26px 26px 0 0; box-shadow: 0 0 5px rgba(0,0,0,.25); }
```
